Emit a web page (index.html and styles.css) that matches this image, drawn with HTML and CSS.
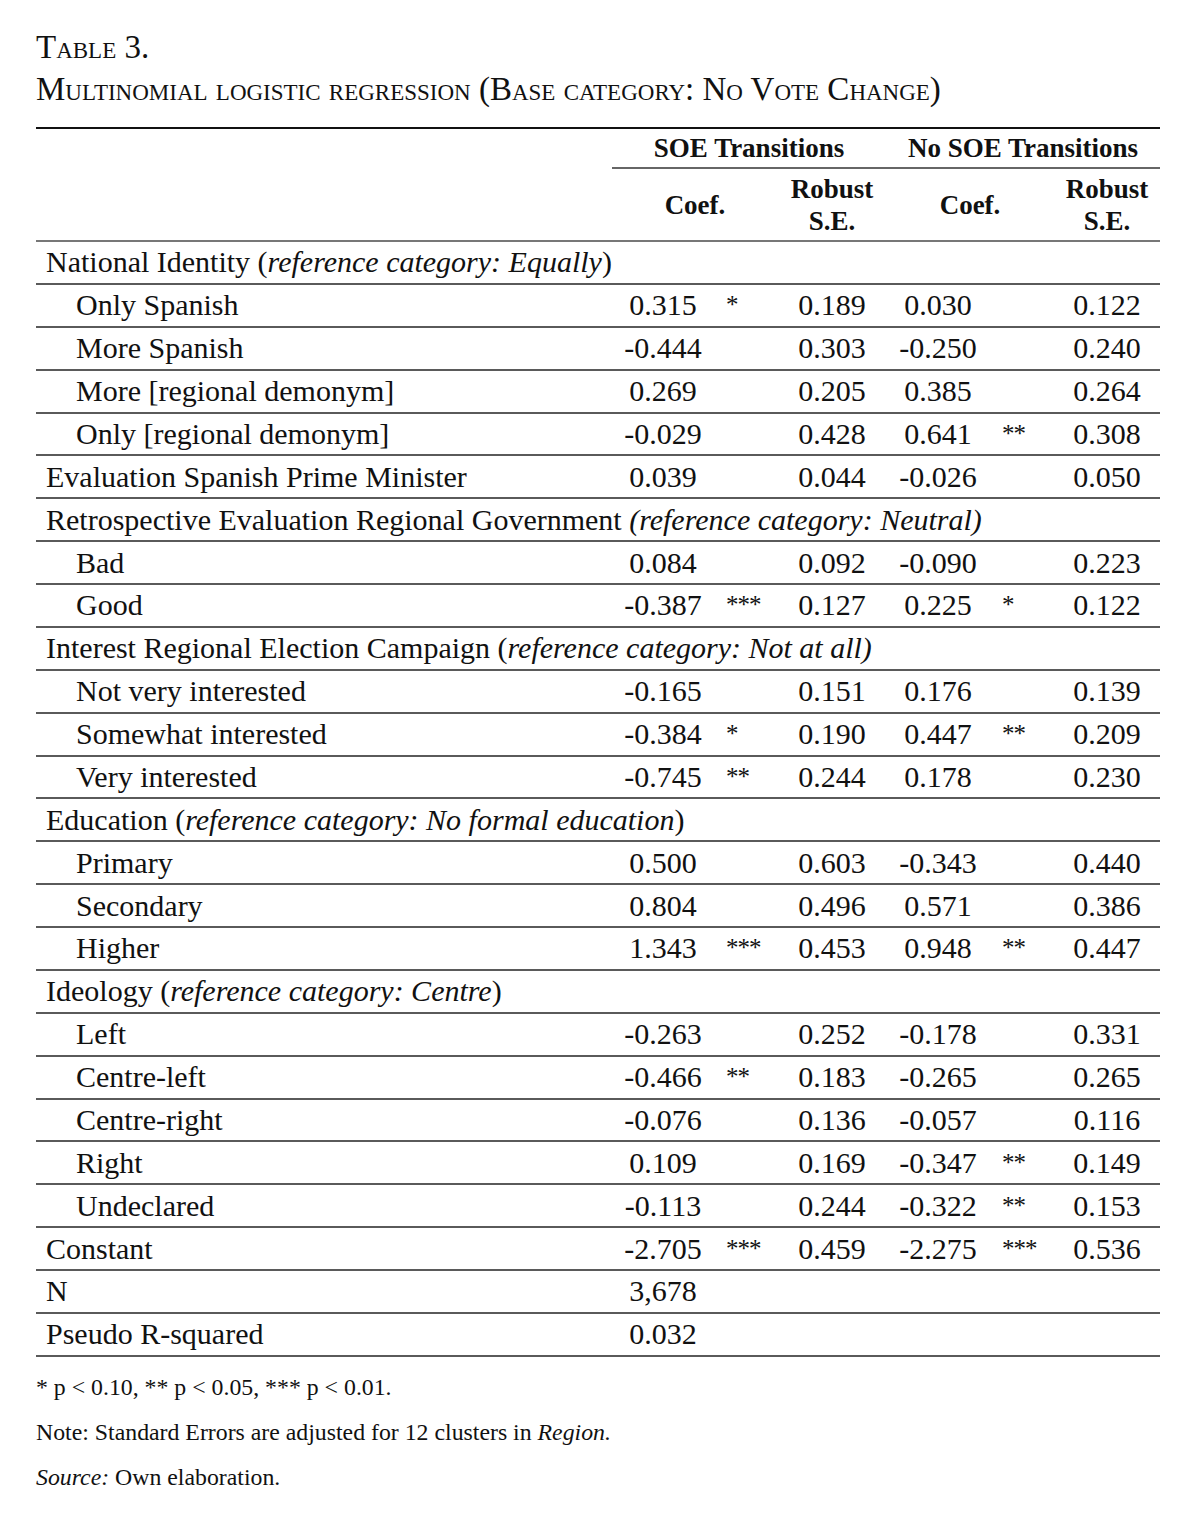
FILE: index.html
```html
<!DOCTYPE html>
<html lang="en">
<head>
<meta charset="utf-8">
<title>Table 3</title>
<link rel="stylesheet" href="styles.css">
</head>
<body>
<div class="title">
  <div>Table 3.</div>
  <div>Multinomial logistic regression (Base category: No Vote Change)</div>
</div>
<table class="reg">
  <colgroup>
    <col class="c-label"><col class="c-coef"><col class="c-star"><col class="c-se"><col class="c-coef2"><col class="c-star"><col class="c-se2">
  </colgroup>
  <thead>
    <tr class="h1">
      <th rowspan="2" class="blank"></th>
      <th colspan="3" class="grp">SOE Transitions</th>
      <th colspan="3" class="grp">No SOE Transitions</th>
    </tr>
    <tr class="h2">
      <th colspan="2">Coef.</th>
      <th>Robust<br>S.E.</th>
      <th colspan="2">Coef.</th>
      <th>Robust<br>S.E.</th>
    </tr>
  </thead>
  <tbody>
    <tr class="sec"><td colspan="7">National Identity (<i>reference category: Equally</i>)</td></tr>
    <tr><td class="lab sub">Only Spanish</td><td class="num">0.315</td><td class="st">*</td><td class="num">0.189</td><td class="num">0.030</td><td class="st"></td><td class="num">0.122</td></tr>
    <tr><td class="lab sub">More Spanish</td><td class="num">-0.444</td><td class="st"></td><td class="num">0.303</td><td class="num">-0.250</td><td class="st"></td><td class="num">0.240</td></tr>
    <tr><td class="lab sub">More [regional demonym]</td><td class="num">0.269</td><td class="st"></td><td class="num">0.205</td><td class="num">0.385</td><td class="st"></td><td class="num">0.264</td></tr>
    <tr><td class="lab sub">Only [regional demonym]</td><td class="num">-0.029</td><td class="st"></td><td class="num">0.428</td><td class="num">0.641</td><td class="st">**</td><td class="num">0.308</td></tr>
    <tr><td class="lab">Evaluation Spanish Prime Minister</td><td class="num">0.039</td><td class="st"></td><td class="num">0.044</td><td class="num">-0.026</td><td class="st"></td><td class="num">0.050</td></tr>
    <tr class="sec"><td colspan="7">Retrospective Evaluation Regional Government <i>(reference category: Neutral)</i></td></tr>
    <tr><td class="lab sub">Bad</td><td class="num">0.084</td><td class="st"></td><td class="num">0.092</td><td class="num">-0.090</td><td class="st"></td><td class="num">0.223</td></tr>
    <tr><td class="lab sub">Good</td><td class="num">-0.387</td><td class="st">***</td><td class="num">0.127</td><td class="num">0.225</td><td class="st">*</td><td class="num">0.122</td></tr>
    <tr class="sec"><td colspan="7">Interest Regional Election Campaign (<i>reference category: Not at all)</i></td></tr>
    <tr><td class="lab sub">Not very interested</td><td class="num">-0.165</td><td class="st"></td><td class="num">0.151</td><td class="num">0.176</td><td class="st"></td><td class="num">0.139</td></tr>
    <tr><td class="lab sub">Somewhat interested</td><td class="num">-0.384</td><td class="st">*</td><td class="num">0.190</td><td class="num">0.447</td><td class="st">**</td><td class="num">0.209</td></tr>
    <tr><td class="lab sub">Very interested</td><td class="num">-0.745</td><td class="st">**</td><td class="num">0.244</td><td class="num">0.178</td><td class="st"></td><td class="num">0.230</td></tr>
    <tr class="sec"><td colspan="7">Education (<i>reference category: No formal education</i>)</td></tr>
    <tr><td class="lab sub">Primary</td><td class="num">0.500</td><td class="st"></td><td class="num">0.603</td><td class="num">-0.343</td><td class="st"></td><td class="num">0.440</td></tr>
    <tr><td class="lab sub">Secondary</td><td class="num">0.804</td><td class="st"></td><td class="num">0.496</td><td class="num">0.571</td><td class="st"></td><td class="num">0.386</td></tr>
    <tr><td class="lab sub">Higher</td><td class="num">1.343</td><td class="st">***</td><td class="num">0.453</td><td class="num">0.948</td><td class="st">**</td><td class="num">0.447</td></tr>
    <tr class="sec"><td colspan="7">Ideology (<i>reference category: Centre</i>)</td></tr>
    <tr><td class="lab sub">Left</td><td class="num">-0.263</td><td class="st"></td><td class="num">0.252</td><td class="num">-0.178</td><td class="st"></td><td class="num">0.331</td></tr>
    <tr><td class="lab sub">Centre-left</td><td class="num">-0.466</td><td class="st">**</td><td class="num">0.183</td><td class="num">-0.265</td><td class="st"></td><td class="num">0.265</td></tr>
    <tr><td class="lab sub">Centre-right</td><td class="num">-0.076</td><td class="st"></td><td class="num">0.136</td><td class="num">-0.057</td><td class="st"></td><td class="num">0.116</td></tr>
    <tr><td class="lab sub">Right</td><td class="num">0.109</td><td class="st"></td><td class="num">0.169</td><td class="num">-0.347</td><td class="st">**</td><td class="num">0.149</td></tr>
    <tr><td class="lab sub">Undeclared</td><td class="num">-0.113</td><td class="st"></td><td class="num">0.244</td><td class="num">-0.322</td><td class="st">**</td><td class="num">0.153</td></tr>
    <tr><td class="lab">Constant</td><td class="num">-2.705</td><td class="st">***</td><td class="num">0.459</td><td class="num">-2.275</td><td class="st">***</td><td class="num">0.536</td></tr>
    <tr><td class="lab">N</td><td class="num">3,678</td><td class="st"></td><td></td><td></td><td class="st"></td><td></td></tr>
    <tr><td class="lab">Pseudo R-squared</td><td class="num">0.032</td><td class="st"></td><td></td><td></td><td class="st"></td><td></td></tr>
  </tbody>
</table>
<div class="notes">
  <p>* p &lt; 0.10, ** p &lt; 0.05, *** p &lt; 0.01.</p>
  <p>Note: Standard Errors are adjusted for 12 clusters in <i>Region.</i></p>
  <p><i>Source:</i> Own elaboration.</p>
</div>
</body>
</html>
```

FILE: styles.css
```css
html, body {
  background: #ffffff;
}

body {
  margin: 0;
  padding: 26px 36px 0;
  font-family: "Liberation Serif", "Times New Roman", serif;
  color: #111111;
}

.title {
  font-size: 33px;
  line-height: 42px;
  font-variant: small-caps;
  margin: 0 0 17px;
}

.reg {
  width: 1124px;
  border-collapse: collapse;
  table-layout: fixed;
  border-top: 2px solid #111111;
  font-size: 30px;
}

.c-label { width: 576px; }
.c-coef { width: 102px; }
.c-star { width: 64px; }
.c-se { width: 108px; }
.c-coef2 { width: 104px; }
.c-se2 { width: 106px; }

.reg th {
  font-weight: bold;
  font-size: 27px;
  text-align: center;
  padding: 0;
  line-height: 32px;
}

.reg .h1 th {
  height: 38px;
}

.reg .h1 th.grp {
  border-bottom: 2px solid #666666;
}

.reg .h2 th {
  height: 71px;
  border-bottom: 2px solid #777777;
}

.reg th.blank {
  border-bottom: 2px solid #777777;
}

.reg td {
  height: 40.88px;
  padding: 0;
  line-height: 34px;
  border-bottom: 2px solid #5a5a5a;
  white-space: nowrap;
}

.reg .sec td {
  padding-left: 10px;
}

.reg td.lab {
  padding-left: 10px;
}

.reg td.sub {
  padding-left: 40px;
}

.reg td.num {
  text-align: center;
}

.reg td.st {
  text-align: left;
  padding-left: 12px;
  font-size: 25px;
  letter-spacing: -1px;
  vertical-align: middle;
}

.notes {
  margin-top: 8px;
  font-size: 23.8px;
  line-height: 45px;
}

.notes p {
  margin: 0;
}
```
